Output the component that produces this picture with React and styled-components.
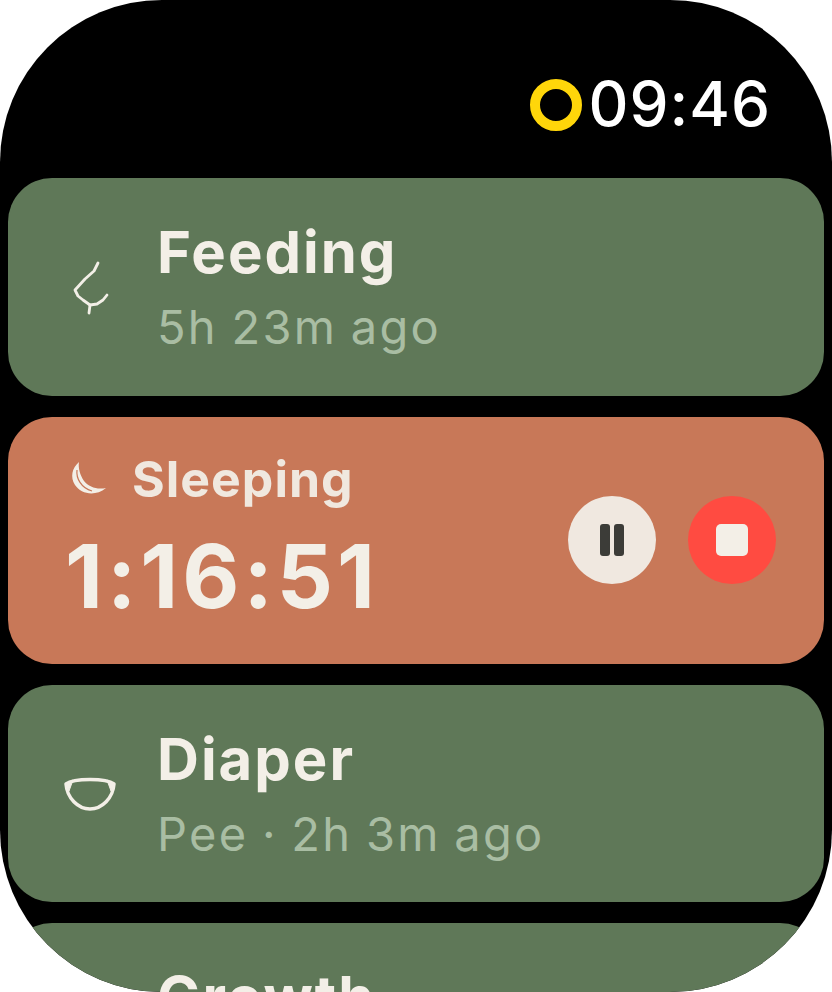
import React from "react"
import styled, { createGlobalStyle } from "styled-components"

const GlobalStyle = createGlobalStyle`
  html, body {
    margin: 0;
    padding: 0;
    background: #fff;
    font-family: Inter, "Liberation Sans", sans-serif;
  }
`

const Screen = styled.div`
  width: 832px;
  height: 992px;
  box-sizing: border-box;
  padding: 0 8px;
  background: #000;
  border-radius: 162px;
  overflow: hidden;
`

const StatusBar = styled.header`
  height: 178px;
  box-sizing: border-box;
  padding: 71px 53px 0 0;
  display: flex;
  justify-content: flex-end;
  align-items: flex-start;
  gap: 6px;
`

const Ring = styled.span`
  width: 52px;
  height: 52px;
  margin-top: 8px;
  box-sizing: border-box;
  border: 10px solid #ffd60a;
  border-radius: 50%;
`

const Clock = styled.span`
  font-size: 62px;
  line-height: 66px;
  font-weight: 500;
  letter-spacing: 1px;
  color: #fff;
`

const List = styled.div`
  display: flex;
  flex-direction: column;
  gap: 21px;
`

const Card = styled.section`
  height: 217.5px;
  flex: none;
  box-sizing: border-box;
  padding-left: 50px;
  display: flex;
  background: #5f7858;
  border-radius: 44px;
`

const IconSlot = styled.div`
  width: 64px;
  height: 64px;
  flex: none;
  align-self: center;
  margin-right: 36px;
`

const CardText = styled.div`
  padding-top: 41px;
  margin-left: -1px;
`

const Title = styled.div`
  font-size: 58px;
  line-height: 66px;
  font-weight: 650;
  letter-spacing: 2px;
  color: #f3efe7;
`

const Subtitle = styled.div`
  margin-top: 14px;
  font-size: 47px;
  line-height: 56px;
  letter-spacing: 2.3px;
  word-spacing: -2px;
  color: #a9bda3;
`

const ActiveCard = styled.section`
  height: 247px;
  flex: none;
  box-sizing: border-box;
  padding: 0 48px 1px 57px;
  display: flex;
  justify-content: space-between;
  align-items: center;
  background: #c87858;
  border-radius: 44px;
`

const ActiveInfo = styled.div`
  padding-bottom: 5px;
`

const ActiveLabel = styled.div`
  display: flex;
  align-items: center;
  gap: 26px;
  padding-left: 5px;
  font-size: 50px;
  line-height: 60px;
  font-weight: 650;
  letter-spacing: 1px;
  color: #f0e8df;
`

const Timer = styled.div`
  margin-top: 17px;
  font-size: 88px;
  line-height: 100px;
  font-weight: 650;
  letter-spacing: 4px;
  color: #f3efe7;
`

const Controls = styled.div`
  display: flex;
  gap: 32px;
`

const RoundButton = styled.button`
  width: 88px;
  height: 88px;
  padding: 0;
  border: 0;
  border-radius: 50%;
  display: flex;
  align-items: center;
  justify-content: center;
  gap: 4px;
  background: ${(p) => (p.$danger ? "#ff4b41" : "#f0e8e0")};
`

const PauseBar = styled.span`
  width: 10px;
  height: 32px;
  border-radius: 3px;
  background: #3c3c38;
`

const StopSquare = styled.span`
  width: 32px;
  height: 32px;
  border-radius: 5px;
  background: #f3efe7;
`

const BreastIcon = () => (
  <svg width="64" height="64" viewBox="0 0 64 64" fill="none" stroke="#f3efe7" strokeWidth="2.8" strokeLinecap="round" strokeLinejoin="round">
    <path d="M40 8 L36 16 L27 24 L17 35 L20 41 L25 45 L32 50 L39 49 L45 45 L49 40" />
    <path d="M32 50 L31 58" />
  </svg>
)

const MoonIcon = () => (
  <svg width="36" height="36" viewBox="0 0 36 36">
    <path d="M9 1 C2 7 0 16 5 24 C11 33 25 36 36 27 C27 29 19 26 14 20 C10 14 8 7 9 1Z" fill="#f3efe7" />
    <path d="M7 9 C6 17 11 27 22 30" fill="none" stroke="#c87858" strokeWidth="1.2" />
  </svg>
)

const DiaperIcon = () => (
  <svg width="64" height="64" viewBox="0 0 64 64" fill="none" stroke="#f3efe7" strokeWidth="3.5" strokeLinejoin="round">
    <path d="M8 23 C16 17 48 17 56 23 C55 37 44 48 32 48 C20 48 9 37 8 23Z" />
    <path d="M8 23 L15 19 L11 30Z M56 23 L49 19 L53 30Z" fill="#f3efe7" strokeWidth="1" />
  </svg>
)

const App = () => {
  return (
    <>
      <GlobalStyle />
      <Screen>
        <StatusBar>
          <Ring />
          <Clock>09:46</Clock>
        </StatusBar>
        <List>
          <Card>
            <IconSlot><BreastIcon /></IconSlot>
            <CardText>
              <Title>Feeding</Title>
              <Subtitle>5h 23m ago</Subtitle>
            </CardText>
          </Card>
          <ActiveCard>
            <ActiveInfo>
              <ActiveLabel><MoonIcon />Sleeping</ActiveLabel>
              <Timer>1:16:51</Timer>
            </ActiveInfo>
            <Controls>
              <RoundButton aria-label="Pause">
                <PauseBar />
                <PauseBar />
              </RoundButton>
              <RoundButton $danger aria-label="Stop">
                <StopSquare />
              </RoundButton>
            </Controls>
          </ActiveCard>
          <Card>
            <IconSlot><DiaperIcon /></IconSlot>
            <CardText>
              <Title>Diaper</Title>
              <Subtitle>Pee · 2h 3m ago</Subtitle>
            </CardText>
          </Card>
          <Card>
            <IconSlot />
            <CardText>
              <Title>Growth</Title>
            </CardText>
          </Card>
        </List>
      </Screen>
    </>
  )
}

export default App
